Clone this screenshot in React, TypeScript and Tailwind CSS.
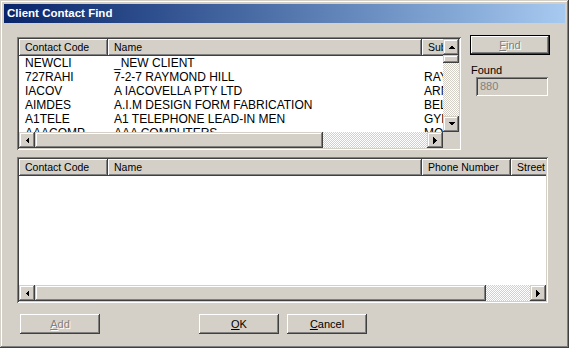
import React from "react";

const RAISED =
  "shadow-[inset_-1px_-1px_#404040,inset_1px_1px_#ffffff,inset_-2px_-2px_#808080,inset_2px_2px_#d4d0c8]";
const SB_BTN =
  "shadow-[inset_-1px_-1px_#404040,inset_1px_1px_#d4d0c8,inset_-2px_-2px_#808080,inset_2px_2px_#ffffff]";
const SUNKEN =
  "shadow-[inset_1px_1px_#808080,inset_-1px_-1px_#ffffff,inset_2px_2px_#404040,inset_-2px_-2px_#d4d0c8]";
const HEADER_CELL =
  "shadow-[inset_-1px_-1px_#404040,inset_1px_1px_#ffffff,inset_-2px_-2px_#808080]";
const TRACK =
  "bg-[repeating-conic-gradient(#ffffff_0%_25%,#d4d0c8_0%_50%)] bg-[length:2px_2px]";

function Arrow({ dir }: { dir: "up" | "down" | "left" | "right" }) {
  const pts =
    dir === "up"
      ? "0,4 7,4 3.5,0.5"
      : dir === "down"
      ? "0,0 7,0 3.5,3.5"
      : dir === "left"
      ? "4,0 4,7 0.5,3.5"
      : "0,0 0,7 3.5,3.5";
  const w = dir === "up" || dir === "down" ? 7 : 4;
  const h = dir === "up" || dir === "down" ? 4 : 7;
  return (
    <svg width={w} height={h} viewBox={`0 0 ${w} ${h}`} shapeRendering="crispEdges">
      <polygon points={pts} fill="#000" />
    </svg>
  );
}

function SbButton({ dir }: { dir: "up" | "down" | "left" | "right" }) {
  return (
    <div className={`w-[16px] h-[16px] shrink-0 bg-[#d4d0c8] ${SB_BTN} flex items-center justify-center`}>
      <Arrow dir={dir} />
    </div>
  );
}

function HScroll({ thumb }: { thumb: number }) {
  return (
    <div className="h-[16px] flex shrink-0">
      <SbButton dir="left" />
      <div className={`h-[16px] shrink-0 bg-[#d4d0c8] ${SB_BTN}`} style={{ width: thumb }} />
      <div className={`flex-1 ${TRACK}`} />
      <SbButton dir="right" />
    </div>
  );
}

type Col = { label: string; w: number };

function Header({ cols }: { cols: Col[] }) {
  return (
    <div className="h-[17px] flex shrink-0 bg-[#d4d0c8] overflow-hidden">
      {cols.map((c, i) => (
        <div
          key={i}
          className={`h-[17px] shrink-0 ${HEADER_CELL} pl-[6px] leading-[17px] whitespace-nowrap overflow-hidden text-[10.5px]`}
          style={{ width: c.w }}
        >
          {c.label}
        </div>
      ))}
    </div>
  );
}

const ROWS = [
  ["NEWCLI", "_NEW CLIENT", ""],
  ["727RAHI", "7-2-7 RAYMOND HILL", "RAYMOND TERRACE"],
  ["IACOV", "A IACOVELLA PTY LTD", "ARNCLIFFE"],
  ["AIMDES", "A.I.M DESIGN FORM FABRICATION", "BELMORE"],
  ["A1TELE", "A1 TELEPHONE LEAD-IN MEN", "GYMEA"],
  ["AAACOMP", "AAA COMPUTERS", "MOSMAN"],
];

function Button({
  children,
  disabled,
  isDefault,
}: {
  children: React.ReactNode;
  disabled?: boolean;
  isDefault?: boolean;
}) {
  if (isDefault) {
    return (
      <div className="w-[80px] h-[20px] border border-black bg-[#d4d0c8] shrink-0">
        <div
          className={`w-full h-full ${RAISED} flex items-center justify-center ${
            disabled ? "text-[#808080] [text-shadow:1px_1px_#ffffff]" : "text-black"
          }`}
        >
          {children}
        </div>
      </div>
    );
  }
  return (
    <div
      className={`w-[80px] h-[20px] bg-[#d4d0c8] ${RAISED} flex items-center justify-center shrink-0 ${
        disabled ? "text-[#808080] [text-shadow:1px_1px_#ffffff]" : "text-black"
      }`}
    >
      {children}
    </div>
  );
}

export default function App() {
  return (
    <div
      className="w-[569px] h-[348px] bg-[#d4d0c8] p-[4px] flex flex-col text-[11px] text-black shadow-[inset_-1px_-1px_#404040,inset_1px_1px_#d4d0c8,inset_-2px_-2px_#808080,inset_2px_2px_#ffffff] overflow-hidden"
      style={{ fontFamily: '"Liberation Sans", Arial, sans-serif' }}
    >
      {/* Title bar */}
      <div className="h-[19px] shrink-0 bg-gradient-to-r from-[#0a246a] to-[#a6caf0] flex items-center pl-[3px]">
        <span className="text-white font-bold text-[11.5px] leading-none">Client Contact Find</span>
      </div>

      {/* Top row */}
      <div className="flex items-start mt-[12px] ml-[13px]">
        {/* upper list */}
        <div className={`w-[444px] h-[113px] mt-[2px] bg-white ${SUNKEN} p-[2px] flex shrink-0`}>
          <div className="flex-1 flex flex-col min-w-0">
            <Header
              cols={[
                { label: "Contact Code", w: 89 },
                { label: "Name", w: 314 },
                { label: "Suburb", w: 120 },
              ]}
            />
            <div className="flex-1 overflow-hidden text-[12px]">
              {ROWS.map((r, i) => (
                <div key={i} className="h-[14px] leading-[14px] flex whitespace-nowrap">
                  <div className="w-[89px] pl-[6px] shrink-0 overflow-hidden">{r[0]}</div>
                  <div className="w-[314px] pl-[6px] shrink-0 overflow-hidden">{r[1]}</div>
                  <div className="w-[120px] pl-[2px] shrink-0 overflow-hidden">{r[2]}</div>
                </div>
              ))}
            </div>
            <HScroll thumb={288} />
          </div>
          <div className="w-[16px] flex flex-col shrink-0">
            <SbButton dir="up" />
            <div className={`h-[8px] shrink-0 bg-[#d4d0c8] ${SB_BTN}`} />
            <div className={`flex-1 ${TRACK}`} />
            <SbButton dir="down" />
            <div className="h-[16px] bg-[#d4d0c8] shrink-0" />
          </div>
        </div>

        {/* right column */}
        <div className="ml-[9px] flex flex-col">
          <Button isDefault disabled>
            <span>
              <span className="underline">F</span>ind
            </span>
          </Button>
          <div className="mt-[9px] h-[13px] leading-[13px] pl-[1px]">Found</div>
          <div
            className={`ml-[6px] w-[72px] h-[19px] bg-[#d4d0c8] ${SUNKEN} pl-[4px] leading-[19px] text-[#808080]`}
          >
            880
          </div>
        </div>
      </div>

      {/* lower list */}
      <div className={`ml-[13px] mt-[7px] w-[531px] h-[146px] bg-white ${SUNKEN} p-[2px] flex flex-col shrink-0`}>
        <Header
          cols={[
            { label: "Contact Code", w: 89 },
            { label: "Name", w: 314 },
            { label: "Phone Number", w: 89 },
            { label: "Street", w: 120 },
          ]}
        />
        <div className="flex-1" />
        <HScroll thumb={451} />
      </div>

      {/* buttons */}
      <div className="flex mt-[11px] ml-[16px]">
        <Button disabled>
          <span>
            <span className="underline">A</span>dd
          </span>
        </Button>
        <div className="w-[99px] shrink-0" />
        <Button>
          <span>
            <span className="underline">O</span>K
          </span>
        </Button>
        <div className="w-[8px] shrink-0" />
        <Button>
          <span>
            <span className="underline">C</span>ancel
          </span>
        </Button>
      </div>
    </div>
  );
}
